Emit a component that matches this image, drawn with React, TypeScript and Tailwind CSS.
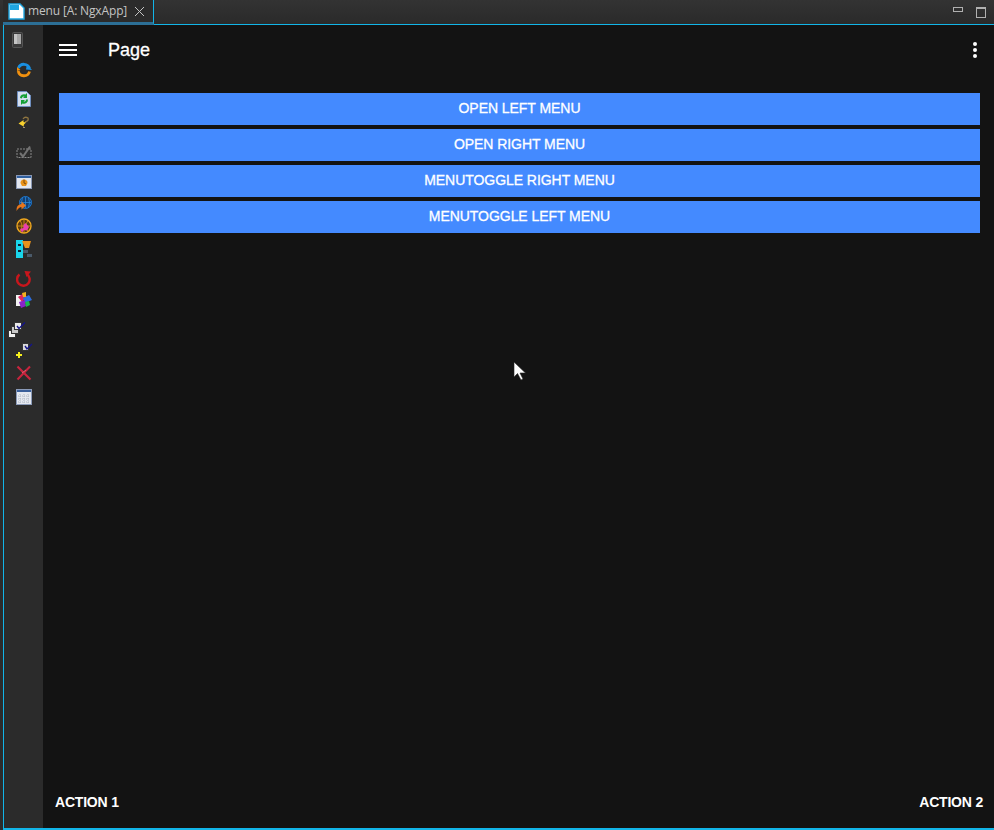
import { ReactNode } from 'react';

// sidebar toolbar icons, drawn at 16x16
const DeviceIcon = () => (
  <svg width="12" height="16" viewBox="0 0 12 16" className="ml-[-12px]">
    <rect x="0.5" y="0.5" width="10" height="15" rx="1" fill="#3a3a3a" stroke="#555" />
    <rect x="2" y="2" width="7" height="10" fill="#a8a8a8" />
    <rect x="2" y="2" width="3" height="10" fill="#c4c4c4" />
  </svg>
);

const SyncIcon = () => (
  <svg width="16" height="16" viewBox="0 0 16 16" fill="none">
    <path d="M2.5 6 A5.8 5.8 0 0 1 13.5 6.5" stroke="#1a8fe0" strokeWidth="2.8" />
    <path d="M11 2 L16 8 L10 7.5 Z" fill="#1a8fe0" />
    <path d="M13.5 9.5 A5.8 5.8 0 0 1 2.2 9" stroke="#f0900f" strokeWidth="2.8" />
    <path d="M1 5 L1 9 L4.5 8 Z" fill="#f0900f" />
  </svg>
);

const FileRefreshIcon = () => (
  <svg width="14" height="16" viewBox="0 0 14 16">
    <path d="M0.5 0.5 H9.5 L13.5 4.5 V15.5 H0.5 Z" fill="#d4dff0" stroke="#6f8fc0" />
    <path d="M3 7 A4 4 0 0 1 8.5 3.5 L10 2 V7 H6 L7.5 5.5 A2 2 0 0 0 5 7.5 Z" fill="#14a035" />
    <path d="M11 8.5 A4 4 0 0 1 5.5 12.5 L4 14 V9 H8 L6.5 10.5 A2 2 0 0 0 9 8.5 Z" fill="#14a035" />
  </svg>
);

const SnapArrowIcon = () => (
  <svg width="12" height="12" viewBox="0 0 12 12" fill="none">
    <path d="M5 3 Q7 0 10 2 Q11 5 7 6" stroke="#8f7540" strokeWidth="1.3" />
    <path d="M0.5 7.5 L5.5 4 L5.5 6 L8 6.5 L6 8.5 L5.5 10.5 Z" fill="#f7d02e" />
    <path d="M5 11 L7 12" stroke="#c9b48a" />
  </svg>
);

const DashedCheckIcon = () => (
  <svg width="16" height="14" viewBox="0 0 16 14" fill="none">
    <rect x="1" y="4" width="14" height="8.5" stroke="#8a8a8a" strokeDasharray="2 1" />
    <path d="M4 8 L7 11.5 L14 1.5" stroke="#737373" strokeWidth="2" />
  </svg>
);

const WindowIcon = () => (
  <svg width="16" height="14" viewBox="0 0 16 14">
    <rect x="0.5" y="0.5" width="15" height="13" fill="#e2e6ee" stroke="#8a98b4" />
    <rect x="1" y="1" width="14" height="2" fill="#2f5f9f" />
    <path d="M4.5 8 A3.5 3.5 0 0 1 11.5 8 L10 11 H6 Z" fill="#e8921a" />
    <path d="M8 4.5 V8 L10 9" stroke="#7a4a10" fill="none" />
  </svg>
);

const GlobeArrowIcon = () => (
  <svg width="16" height="16" viewBox="0 0 16 16" fill="none">
    <circle cx="9.5" cy="6.5" r="6" fill="#123f73" stroke="#1d78d0" />
    <path d="M9.5 1 V12 M4 6.5 H15 M6.5 1.5 Q4.5 6.5 6.5 11.5 M12.5 1.5 Q14.5 6.5 12.5 11.5" stroke="#2a86d8" strokeWidth="0.8" />
    <path d="M0.5 15 Q0 8.5 5.5 8 L5.5 5.5 L10 9.5 L5.5 13.5 L5.5 11 Q3 11 0.5 15 Z" fill="#e8761a" />
  </svg>
);

const GlobePinkIcon = () => (
  <svg width="16" height="16" viewBox="0 0 16 16" fill="none">
    <circle cx="8" cy="8" r="7" fill="#5a3a10" stroke="#f0a81e" strokeWidth="1.4" />
    <path d="M8 1 V15 M1 8 H15 M4 2.5 Q8 8 4 13.5 M12 2.5 Q8 8 12 13.5" stroke="#d99a20" strokeWidth="0.8" />
    <path d="M4 11 L7.5 10 L7.5 7 L9.5 5 L13 9 L11 12.5 L8 12 L6 14.5 Z" fill="#ea3fae" />
  </svg>
);

const TreeIcon = () => (
  <svg width="16" height="18" viewBox="0 0 16 18">
    <rect x="0" y="0" width="7" height="18" fill="#19d5ea" />
    <rect x="2" y="4" width="3" height="2" fill="#123" />
    <rect x="2" y="10" width="3" height="2" fill="#123" />
    <path d="M6 1 H15 L13 8 H9 Z" fill="#e8921a" />
    <rect x="7" y="10" width="5" height="3" fill="#4a5a6a" />
    <rect x="11" y="14" width="5" height="3" fill="#4a5a6a" />
  </svg>
);

const RedRefreshIcon = () => (
  <svg width="16" height="16" viewBox="0 0 16 16" fill="none">
    <path d="M10.5 3 A6.3 6.3 0 1 1 3.5 3.5" stroke="#c8161c" strokeWidth="2.4" />
    <path d="M8.5 0 L15 0.5 L10.5 6 Z" fill="#c8161c" />
  </svg>
);

const CubesIcon = () => (
  <svg width="16" height="16" viewBox="0 0 16 16">
    <rect x="0" y="3" width="7" height="11" fill="#f2f2f2" />
    <path d="M2 5 L8 1 L11 5 L6 10 Z" fill="#e0245e" />
    <path d="M7 6 L13 3 L16 8 L9 11 Z" fill="#2a6de0" />
    <path d="M3 10 L9 8 L10 14 L5 16 Z" fill="#8a22c8" />
    <path d="M9 10 L13 9 L14 13 L10 15 Z" fill="#19b84a" />
    <path d="M6 1 L10 0 L10 5 L7 5 Z" fill="#f0b01e" />
  </svg>
);

const DocStackIcon = () => (
  <svg width="20" height="16" viewBox="0 0 20 16" className="ml-[-12px]">
    <rect x="0.5" y="8.5" width="7" height="7" fill="#f2f2f2" stroke="#333" />
    <rect x="3.5" y="4.5" width="7" height="7" fill="#c8c8c8" stroke="#333" />
    <rect x="6.5" y="0.5" width="7" height="7" fill="#e8e8e8" stroke="#333" />
    <path d="M9 4 L11 6.5 L17 0.5" stroke="#14148a" strokeWidth="1.4" fill="none" />
  </svg>
);

const DocPlusIcon = () => (
  <svg width="20" height="16" viewBox="0 0 20 16" className="ml-[2px]">
    <rect x="7.5" y="0.5" width="6" height="7" fill="#d8d8d8" stroke="#333" />
    <path d="M10 3 L12 6 L17 1" stroke="#14148a" strokeWidth="1.4" fill="none" />
    <path d="M3 9 H5 V11 H7 V13 H5 V15 H3 V13 H1 V11 H3 Z" fill="#f7f01e" />
  </svg>
);

const RedCrossIcon = () => (
  <svg width="16" height="16" viewBox="0 0 16 16" fill="none">
    <path d="M1.5 1.5 L14.5 14.5" stroke="#c8243e" strokeWidth="2.2" />
    <path d="M14 1.5 L1.5 14.5" stroke="#c8243e" strokeWidth="2" />
    <path d="M6 8 L10 5" stroke="#e0707e" strokeWidth="0.8" />
  </svg>
);

const TableIcon = () => (
  <svg width="16" height="16" viewBox="0 0 16 16" fill="none">
    <rect x="0.5" y="0.5" width="15" height="15" fill="#e4e8f0" stroke="#8a9ab8" />
    <rect x="1" y="1" width="14" height="2" fill="#3a5f9a" />
    <path d="M4 5 V14 M8 5 V14 M12 5 V14 M2 7 H14 M2 10 H14 M2 13 H14" stroke="#b0b8c4" strokeDasharray="1 1" />
  </svg>
);

const toolbar: { icon: ReactNode; gap: string }[] = [
  { icon: <DeviceIcon />, gap: 'mt-[7px]' },
  { icon: <SyncIcon />, gap: 'mt-[14px]' },
  { icon: <FileRefreshIcon />, gap: 'mt-[13px]' },
  { icon: <SnapArrowIcon />, gap: 'mt-[7px]' },
  { icon: <DashedCheckIcon />, gap: 'mt-[14px]' },
  { icon: <WindowIcon />, gap: 'mt-[14px]' },
  { icon: <GlobeArrowIcon />, gap: 'mt-[6px]' },
  { icon: <GlobePinkIcon />, gap: 'mt-[6px]' },
  { icon: <TreeIcon />, gap: 'mt-[7px]' },
  { icon: <RedRefreshIcon />, gap: 'mt-[14px]' },
  { icon: <CubesIcon />, gap: 'mt-[5px]' },
  { icon: <DocStackIcon />, gap: 'mt-[14px]' },
  { icon: <DocPlusIcon />, gap: 'mt-[5px]' },
  { icon: <RedCrossIcon />, gap: 'mt-[6px]' },
  { icon: <TableIcon />, gap: 'mt-[8px]' },
];

const menuButtons = ['Open left menu', 'Open right menu', 'MenuToggle right menu', 'MenuToggle left menu'];

export default function App() {
  return (
    <div className="relative w-[994px] h-[830px] overflow-hidden flex flex-col bg-[#2b2b2b] font-['Liberation_Sans',sans-serif]">
      {/* editor tab strip */}
      <div className="h-[24px] flex items-stretch bg-gradient-to-b from-[#333333] to-[#2a2a2a]">
        <div className="ml-[3px] w-[151px] h-[25px] flex items-center bg-[#2b2b2b] border-r border-r-[#12b5e8] border-b-[3px] border-b-[#2c6f96] z-10">
          <svg width="17" height="17" viewBox="0 0 17 17" className="ml-[5px] mt-[1px]">
            <path d="M1 1 H12 L16 5 V16 H1 Z" fill="#ffffff" stroke="#1fa5e0" strokeWidth="1.4" />
            <rect x="2" y="2" width="9" height="5" fill="#1fa5e0" />
          </svg>
          <span className="ml-[3px] text-[12px] tracking-[-0.15px] text-[#c4c4c4] font-['Open_Sans',sans-serif] whitespace-nowrap">menu [A: NgxApp]</span>
          <svg width="11" height="11" viewBox="0 0 11 11" className="ml-[7px]" fill="none" stroke="#c4c4c4">
            <path d="M1 1 L10 10 M10 1 L1 10" />
          </svg>
        </div>
        <div className="flex-1" />
        <div className="w-[8px] h-[3px] mt-[7px] mr-[13px] border border-[#b0b0b0] box-content" />
        <div className="w-[8px] h-[8px] mt-[7px] mr-[8px] border border-[#b0b0b0] border-t-2 box-content" />
      </div>

      {/* editor frame */}
      <div className="flex-1 min-h-0 ml-[3px] flex border-l border-l-[#12b5e8] border-t border-t-[#12b5e8] border-b-2 border-b-[#12b5e8]">
        <div className="w-[39px] shrink-0 flex flex-col items-center pl-[1px] bg-[#2b2b2b]">
          {toolbar.map((t, i) => (
            <div key={i} className={`h-[16px] flex items-center justify-center ${t.gap}`}>
              {t.icon}
            </div>
          ))}
        </div>

        {/* emulated page */}
        <div className="flex-1 min-w-0 flex flex-col bg-[#131313] text-white">
          <div className="h-[50px] flex items-center">
            <svg width="24" height="24" viewBox="0 0 24 24" className="ml-[13px]" fill="#fff">
              <path d="M3 18h18v-2H3v2zm0-5h18v-2H3v2zm0-7v2h18V6H3z" />
            </svg>
            <span className="ml-[28px] text-[18px] leading-none [-webkit-text-stroke:0.3px_white]">Page</span>
            <div className="flex-1" />
            <svg width="24" height="24" viewBox="0 0 24 24" className="mr-[7px]" fill="#fff">
              <circle cx="12" cy="6" r="2" />
              <circle cx="12" cy="12" r="2" />
              <circle cx="12" cy="18" r="2" />
            </svg>
          </div>

          <div className="mt-[18px] ml-[16px] mr-[14px] flex flex-col gap-[4px]">
            {menuButtons.map((label) => (
              <button key={label} className="h-[32px] pb-[2px] bg-[#448aff] text-white text-[14px] uppercase tracking-[-0.05px] [-webkit-text-stroke:0.3px_white]">
                {label}
              </button>
            ))}
          </div>

          <div className="mt-auto h-[50px] flex items-center justify-between pl-[12px] pr-[11px] pb-[2px] text-[14px] font-bold tracking-[-0.2px]">
            <span>ACTION 1</span>
            <span>ACTION 2</span>
          </div>
        </div>
      </div>

      {/* mouse pointer */}
      <svg width="14" height="20" viewBox="0 0 14 20" className="absolute left-[513px] top-[361px]">
        <path d="M1 1 L1 16 L4.5 12.5 L8 19 L10 18 L7 12 L12.5 12 Z" fill="#fff" stroke="#222" strokeWidth="0.6" />
      </svg>
    </div>
  );
}
